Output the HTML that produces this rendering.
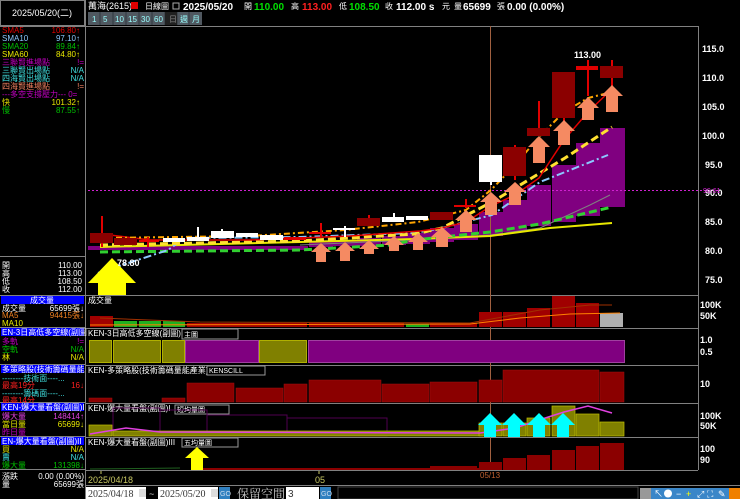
<!DOCTYPE html>
<html><head><meta charset="utf-8"><style>
html,body{margin:0;padding:0;background:#000;width:740px;height:499px;overflow:hidden}
svg{display:block;font-family:"Liberation Sans","Noto Sans CJK TC",sans-serif}
</style></head><body>
<svg width="740" height="499" viewBox="0 0 740 499" xmlns="http://www.w3.org/2000/svg">
<rect width="740" height="499" fill="#000"/>
<!-- LEFT PANEL -->
<g stroke="#808080" stroke-width="1" fill="none">
<rect x="0.5" y="0.5" width="84" height="25"/>
<line x1="85.5" y1="0" x2="85.5" y2="499"/>
<line x1="0" y1="26.5" x2="85" y2="26.5"/>
<line x1="0" y1="256.5" x2="85" y2="256.5"/>
<line x1="0" y1="295.5" x2="85" y2="295.5"/>
<line x1="0" y1="327.5" x2="85" y2="327.5"/>
<line x1="0" y1="364.5" x2="85" y2="364.5"/>
<line x1="0" y1="402.5" x2="85" y2="402.5"/>
<line x1="0" y1="436.5" x2="85" y2="436.5"/>
<line x1="0" y1="469.5" x2="85" y2="469.5"/>
</g>
<text x="42" y="16" fill="#fff" font-size="9" text-anchor="middle">2025/05/20(二)</text>
<g font-size="8">
<text x="2" y="33" fill="#e00000">SMA5</text><text x="80" y="33" fill="#e00000" text-anchor="end">106.80↑</text>
<text x="2" y="41" fill="#8cc8ff">SMA10</text><text x="80" y="41" fill="#8cc8ff" text-anchor="end">97.10↑</text>
<text x="2" y="49" fill="#00c000">SMA20</text><text x="80" y="49" fill="#00c000" text-anchor="end">89.84↑</text>
<text x="2" y="57" fill="#e8e800">SMA60</text><text x="80" y="57" fill="#e8e800" text-anchor="end">84.80↑</text>
<text x="2" y="65" fill="#c000c0">三聯賢進場點</text><text x="84" y="65" fill="#c000c0" text-anchor="end">!=</text>
<text x="2" y="73" fill="#40e0e0">三聯賢出場點</text><text x="84" y="73" fill="#40e0e0" text-anchor="end">N/A</text>
<text x="2" y="81" fill="#40e0e0">四海賢出場點</text><text x="84" y="81" fill="#40e0e0" text-anchor="end">N/A</text>
<text x="2" y="89" fill="#f08060">四海賢進場點</text><text x="84" y="89" fill="#f08060" text-anchor="end">!=</text>
<text x="2" y="97" fill="#c000c0">---多空支撐壓力--- 0=</text>
<text x="2" y="105" fill="#e8e800">快</text><text x="80" y="105" fill="#e8e800" text-anchor="end">101.32↑</text>
<text x="2" y="113" fill="#00c000">慢</text><text x="80" y="113" fill="#00c000" text-anchor="end">87.55↑</text>
<g fill="#fff">
<text x="2" y="268">開</text><text x="82" y="268" text-anchor="end">110.00</text>
<text x="2" y="276">高</text><text x="82" y="276" text-anchor="end">113.00</text>
<text x="2" y="284">低</text><text x="82" y="284" text-anchor="end">108.50</text>
<text x="2" y="292">收</text><text x="82" y="292" text-anchor="end">112.00</text>
</g>
<rect x="1" y="296" width="83" height="8" fill="#0000ff"/><text x="42" y="303" fill="#fff" text-anchor="middle">成交量</text>
<text x="2" y="311" fill="#fff">成交量</text><text x="84" y="311" fill="#fff" text-anchor="end">65699張↓</text>
<text x="2" y="318" fill="#f08020">MA5</text><text x="84" y="318" fill="#f08020" text-anchor="end">94415張↓</text>
<text x="2" y="326" fill="#e8e800">MA10</text>
<rect x="1" y="328" width="83" height="8" fill="#0000ff"/><text x="2" y="335" fill="#fff">EN-3日高低多空線(副圖</text>
<text x="2" y="344" fill="#c000c0">多軌</text><text x="84" y="344" fill="#c000c0" text-anchor="end">!=</text>
<text x="2" y="352" fill="#00c000">空軌</text><text x="84" y="352" fill="#00c000" text-anchor="end">N/A</text>
<text x="2" y="360" fill="#e8e800">林</text><text x="84" y="360" fill="#e8e800" text-anchor="end">N/A</text>
<rect x="1" y="365" width="83" height="8" fill="#0000ff"/><text x="2" y="372" fill="#fff">多策略股(技術籌碼量能</text>
<text x="2" y="381" fill="#40e0e0">--------技術面----...</text>
<text x="2" y="388" fill="#ff2020">最高19分</text><text x="84" y="388" fill="#ff2020" text-anchor="end">16↓</text>
<text x="2" y="396" fill="#40e0e0">--------籌碼面----...</text>
<text x="2" y="403" fill="#ff2020">最高14分</text>
<rect x="1" y="403" width="83" height="8" fill="#0000ff"/><text x="2" y="410" fill="#fff">KEN-爆大量看盤(副圖)I</text>
<text x="2" y="419" fill="#e040e0">爆大量</text><text x="84" y="419" fill="#e040e0" text-anchor="end">148414↑</text>
<text x="2" y="427" fill="#e8e800">當日量</text><text x="84" y="427" fill="#e8e800" text-anchor="end">65699↓</text>
<text x="2" y="435" fill="#c000c0">昨日量</text>
<rect x="1" y="437" width="83" height="8" fill="#0000ff"/><text x="2" y="444" fill="#fff">EN-爆大量看盤(副圖)II</text>
<text x="2" y="452" fill="#e8e800">買</text><text x="84" y="452" fill="#e8e800" text-anchor="end">N/A</text>
<text x="2" y="460" fill="#40e0e0">賣</text><text x="84" y="460" fill="#40e0e0" text-anchor="end">N/A</text>
<text x="2" y="468" fill="#00c000">爆大量</text><text x="84" y="468" fill="#00c000" text-anchor="end">131398↓</text>
<text x="2" y="479" fill="#fff">漲跌</text><text x="84" y="479" fill="#fff" text-anchor="end">0.00 (0.00%)</text>
<text x="2" y="487" fill="#fff">量</text><text x="84" y="487" fill="#fff" text-anchor="end">65699張</text>
</g>
<!-- TOP BAR -->
<g font-size="9">
<text x="88" y="9" fill="#fff">萬海(2615)</text><rect x="131" y="2" width="7" height="7" fill="#e00000"/>
<text x="145" y="9" fill="#fff" font-size="8">日線圖</text><rect x="173" y="3" width="6" height="6" fill="none" stroke="#aaa"/>
<text x="183" y="10" fill="#fff" font-weight="bold" font-size="10">2025/05/20</text>
<text x="244" y="9" fill="#fff" font-size="8">開</text><text x="254" y="10" fill="#00e000" font-weight="bold" font-size="10">110.00</text>
<text x="291" y="9" fill="#fff" font-size="8">高</text><text x="302" y="10" fill="#ff2020" font-weight="bold" font-size="10">113.00</text>
<text x="339" y="9" fill="#fff" font-size="8">低</text><text x="349" y="10" fill="#00e000" font-weight="bold" font-size="10">108.50</text>
<text x="385" y="9" fill="#fff" font-size="8">收</text><text x="396" y="10" fill="#fff" font-weight="bold" font-size="10">112.00 s</text>
<text x="442" y="9" fill="#fff" font-size="8">元</text><text x="454" y="9" fill="#fff" font-size="8">量</text>
<text x="463" y="10" fill="#fff" font-weight="bold" font-size="10">65699</text><text x="497" y="9" fill="#fff" font-size="8">張</text>
<text x="507" y="10" fill="#fff" font-weight="bold" font-size="10">0.00 (0.00%)</text>
</g>
<g font-size="8" fill="#9ff">
<rect x="88" y="12" width="114" height="13" fill="#505860"/>
<g stroke="#30383f"><line x1="100" y1="12" x2="100" y2="25"/><line x1="113" y1="12" x2="113" y2="25"/><line x1="126" y1="12" x2="126" y2="25"/><line x1="139" y1="12" x2="139" y2="25"/><line x1="152" y1="12" x2="152" y2="25"/><line x1="165" y1="12" x2="165" y2="25"/><line x1="177" y1="12" x2="177" y2="25"/><line x1="189" y1="12" x2="189" y2="25"/></g>
<rect x="165" y="12" width="12" height="13" fill="#202020"/>
<text x="92" y="22">1</text><text x="103" y="22">5</text><text x="115" y="22">10</text><text x="128" y="22">15</text><text x="141" y="22">30</text><text x="154" y="22">60</text>
<text x="169" y="22" fill="#888">日</text><text x="180" y="22">週</text><text x="192" y="22">月</text>
</g>
<!-- GRID -->
<g stroke="#808080" fill="none">
<line x1="86" y1="26.5" x2="698" y2="26.5"/>
<line x1="698.5" y1="26" x2="698.5" y2="470"/>
<line x1="86" y1="295.5" x2="698" y2="295.5"/>
<line x1="86" y1="328.5" x2="698" y2="328.5"/>
<line x1="86" y1="365.5" x2="698" y2="365.5"/>
<line x1="86" y1="403.5" x2="698" y2="403.5"/>
<line x1="86" y1="437.5" x2="698" y2="437.5"/>
<line x1="86" y1="470.5" x2="698" y2="470.5"/>
<line x1="86" y1="485.5" x2="740" y2="485.5"/>
</g>
<!-- purple fills -->
<g fill="#800080">
<rect x="309" y="241" width="24" height="6"/><rect x="333" y="240" width="24" height="6"/><rect x="357" y="238" width="24" height="8"/><rect x="382" y="236" width="24" height="9"/><rect x="406" y="233" width="24" height="11"/><rect x="430" y="228" width="24" height="14"/><rect x="454" y="224" width="24" height="16"/><rect x="479" y="212" width="24" height="24"/><rect x="503" y="200" width="24" height="32"/><rect x="527" y="185" width="24" height="41"/><rect x="552" y="165" width="24" height="57"/><rect x="576" y="143" width="24" height="73"/><rect x="600" y="128" width="25" height="79"/>
<rect x="88" y="246" width="220" height="4"/>
</g>
<line x1="88" y1="190.5" x2="718" y2="190.5" stroke="#d020d0" stroke-dasharray="2,2"/>
<line x1="490.5" y1="26" x2="490.5" y2="470" stroke="#a06040"/>
<!-- MAs -->
<polyline fill="none" stroke="#808080" stroke-width="1" points="300,245 415,240 490,235 540,228 590,205 610,195"/>
<polyline fill="none" stroke="#e8e800" stroke-width="2" points="100,247 300,242 415,239 490,236 550,228 612,223"/>
<polyline fill="none" stroke="#30d030" stroke-width="3" stroke-dasharray="8,4" points="100,252 300,250 390,245 415,240 490,232 540,224 612,207"/>
<polyline fill="none" stroke="#8cc8ff" stroke-width="2" stroke-dasharray="8,3,2,3" points="98,273 168,250 185,238 300,237 415,233 442,228 492,215 540,182 608,155"/>
<polyline fill="none" stroke="#ffe030" stroke-width="3" stroke-dasharray="8,4" points="100,245 300,241 415,234 442,228 492,202 540,173 565,158 612,127"/>
<polyline fill="none" stroke="#e00000" stroke-width="1.5" points="102,234 150,240 250,240 350,236 420,231 442,228 466,222 491,206 515,195 539,178 564,140 588,112 612,89"/>
<polyline fill="none" stroke="#ffa500" stroke-width="2" stroke-dasharray="6,3,2,3" points="102,238 250,236 345,230 418,222 466,210 491,190 515,165 539,137 564,112 588,98 612,92"/>
<!-- candles -->
<g stroke="#e00000" stroke-width="2">
<line x1="102" y1="216" x2="102" y2="247"/><line x1="148" y1="237" x2="148" y2="247"/><line x1="321" y1="223" x2="321" y2="237"/><line x1="369" y1="215" x2="369" y2="226"/><line x1="466" y1="199" x2="466" y2="208"/><line x1="515" y1="145" x2="515" y2="180"/><line x1="539" y1="101" x2="539" y2="136"/><line x1="564" y1="118" x2="564" y2="121"/><line x1="588" y1="60" x2="588" y2="96"/><line x1="612" y1="60" x2="612" y2="87"/>
</g>
<g stroke="#fff" stroke-width="2"><line x1="198" y1="227" x2="198" y2="238"/><line x1="222" y1="229" x2="222" y2="236"/><line x1="345" y1="226" x2="345" y2="237"/><line x1="394" y1="213" x2="394" y2="222"/><line x1="491" y1="155" x2="491" y2="185"/></g>
<g fill="#8b0000">
<rect x="90" y="233" width="23" height="10"/><rect x="114" y="238" width="23" height="7"/><rect x="357" y="218" width="23" height="8"/><rect x="430" y="212" width="23" height="8"/><rect x="503" y="147" width="23" height="29"/><rect x="527" y="128" width="23" height="8"/><rect x="552" y="72" width="23" height="46"/><rect x="600" y="66" width="23" height="12"/>
</g>
<g fill="#e00000"><rect x="139" y="240" width="20" height="2"/><rect x="284" y="237" width="22" height="3"/><rect x="309" y="232" width="22" height="2"/><rect x="454" y="205" width="22" height="2"/><rect x="576" y="66" width="22" height="4"/></g>
<g fill="#fff"><rect x="163" y="238" width="22" height="4"/><rect x="187" y="237" width="22" height="4"/><rect x="211" y="231" width="23" height="7"/><rect x="236" y="233" width="22" height="4"/><rect x="260" y="235" width="23" height="5"/><rect x="333" y="228" width="22" height="2"/><rect x="382" y="217" width="22" height="5"/><rect x="406" y="216" width="22" height="4"/><rect x="479" y="155" width="23" height="27"/></g>
<!-- salmon arrows -->
<g fill="#f58a62">
<path d="M321,243 l-10,9 h5 v10 h10 v-10 h5z"/>
<path d="M345,242 l-10,9 h5 v10 h10 v-10 h5z"/>
<path d="M369,240 l-10,9 h5 v5 h10 v-5 h5z"/>
<path d="M394,236 l-10,9 h5 v6 h10 v-6 h5z"/>
<path d="M418,233 l-10,9 h5 v8 h10 v-8 h5z"/>
<path d="M442,227 l-11,10 h5 v10 h12 v-10 h5z"/>
<path d="M466,210 l-11,10 h5 v12 h12 v-12 h5z"/>
<path d="M491,192 l-11,10 h5 v13 h12 v-13 h5z"/>
<path d="M515,182 l-11,10 h5 v13 h12 v-13 h5z"/>
<path d="M539,136 l-11,11 h5 v16 h12 v-16 h5z"/>
<path d="M564,120 l-11,11 h5 v14 h12 v-14 h5z"/>
<path d="M588,97 l-11,11 h5 v12 h12 v-12 h5z"/>
<path d="M612,85 l-11,11 h5 v16 h12 v-16 h5z"/>
</g>
<path d="M112,258 l-24,25 h10 v12 h28 v-12 h10z" fill="#ffff00"/>
<text x="117" y="266" fill="#fff" font-size="9" font-weight="bold">78.80</text>
<text x="574" y="58" fill="#fff" font-size="9" font-weight="bold">113.00</text>
<g fill="#fff" font-size="9" font-weight="bold">
<text x="702" y="52">115.0</text><text x="702" y="81">110.0</text><text x="702" y="110">105.0</text><text x="702" y="139">100.0</text><text x="705" y="168">95.0</text><text x="705" y="196">90.0</text><text x="705" y="225">85.0</text><text x="705" y="254">80.0</text><text x="705" y="283">75.0</text>
<text x="700" y="308">100K</text><text x="700" y="319">50K</text><text x="700" y="343">1.0</text><text x="700" y="355">0.5</text><text x="700" y="387">10</text><text x="700" y="419">100K</text><text x="700" y="429">50K</text><text x="700" y="452">100</text><text x="700" y="463">90</text>
</g>
<text x="703" y="193" fill="#d020d0" font-size="7">90.61</text>
<!-- volume panel -->
<text x="88" y="303" fill="#fff" font-size="8">成交量</text>
<g fill="#a00000"><rect x="90" y="316" width="23" height="11"/><rect x="187" y="323" width="120" height="4"/><rect x="309" y="323" width="95" height="4"/><rect x="430" y="323" width="47" height="4"/><rect x="479" y="312" width="23" height="15"/><rect x="503" y="312" width="23" height="15"/><rect x="527" y="308" width="23" height="19"/><rect x="552" y="296" width="23" height="31"/><rect x="576" y="303" width="23" height="24"/></g>
<g fill="#20b020"><rect x="114" y="321" width="23" height="6"/><rect x="139" y="321" width="22" height="6"/><rect x="163" y="321" width="22" height="6"/><rect x="406" y="324" width="23" height="3"/></g>
<rect x="600" y="313" width="23" height="14" fill="#b0b0b0"/>
<polyline fill="none" stroke="#ff8000" points="90,325 470,324 520,318 570,314 620,313"/>
<polyline fill="none" stroke="#a03000" points="100,318 200,322 470,323 540,310 590,305 612,305"/>
<!-- 3day panel -->
<text x="88" y="336" fill="#fff" font-size="8">KEN-3日高低多空線(副圖)</text>
<rect x="182" y="329" width="56" height="10" fill="#000" stroke="#999"/><text x="184" y="337" fill="#fff" font-size="7">主圖</text>
<g fill="#808000" stroke="#b0b000"><rect x="89.5" y="340.5" width="22" height="22"/><rect x="113.5" y="340.5" width="47" height="22"/><rect x="162.5" y="340.5" width="22" height="22"/><rect x="259.5" y="340.5" width="47" height="22"/></g>
<g fill="#800080" stroke="#a040a0"><rect x="185.5" y="340.5" width="73" height="22"/><rect x="308.5" y="340.5" width="316" height="22"/></g>
<!-- strategy panel -->
<text x="88" y="373" fill="#fff" font-size="8">KEN-多策略股(技術籌碼量能產業)</text>
<rect x="207" y="366" width="58" height="9" fill="#000" stroke="#999"/><text x="209" y="373" fill="#fff" font-size="7">KENSCILL</text>
<g fill="#8b0000" stroke="#a01010" stroke-width="0.5"><rect x="89" y="398" width="23" height="4"/><rect x="162" y="398" width="23" height="4"/><rect x="187" y="383" width="47" height="19"/><rect x="236" y="388" width="47" height="14"/><rect x="284" y="384" width="23" height="18"/><rect x="309" y="380" width="72" height="22"/><rect x="382" y="384" width="47" height="18"/><rect x="430" y="382" width="47" height="20"/><rect x="479" y="380" width="23" height="22"/><rect x="503" y="370" width="96" height="32"/><rect x="600" y="372" width="24" height="30"/></g>
<!-- explosive I -->
<text x="88" y="411" fill="#fff" font-size="8">KEN-爆大量看盤(副圖)I</text>
<rect x="175" y="405" width="54" height="9" fill="#000" stroke="#999"/><text x="177" y="412" fill="#fff" font-size="7">短均量圖</text>
<g fill="none" stroke="#500050"><rect x="113" y="408" width="47" height="28"/><rect x="160" y="410" width="47" height="26"/><rect x="207" y="415" width="80" height="21"/><rect x="287" y="418" width="100" height="18"/></g>
<g fill="#808000" stroke="#c0c000" stroke-width="0.7"><rect x="89" y="425" width="23" height="11"/><rect x="113" y="431" width="370" height="5"/><rect x="479" y="423" width="23" height="13"/><rect x="503" y="423" width="23" height="13"/><rect x="527" y="418" width="23" height="18"/><rect x="552" y="406" width="23" height="30"/><rect x="576" y="414" width="23" height="22"/><rect x="600" y="422" width="24" height="14"/></g>
<polyline fill="none" stroke="#e040e0" stroke-width="1.5" points="90,434 126,428 160,432 480,433 515,428 539,420 564,412 588,406 612,413"/>
<g fill="#00ffff"><path d="M490,413 l-12,12 h6 v12 h12 v-12 h6z"/><path d="M514,413 l-12,12 h6 v12 h12 v-12 h6z"/><path d="M539,413 l-12,12 h6 v12 h12 v-12 h6z"/><path d="M563,413 l-12,12 h6 v12 h12 v-12 h6z"/></g>
<!-- explosive II -->
<text x="88" y="445" fill="#fff" font-size="8">KEN-爆大量看盤(副圖)III</text>
<rect x="182" y="438" width="56" height="9" fill="#000" stroke="#999"/><text x="184" y="445" fill="#fff" font-size="7">五均量圖</text>
<g fill="#8b0000"><rect x="200" y="468" width="280" height="2"/><rect x="430" y="466" width="47" height="4"/><rect x="479" y="462" width="23" height="8"/><rect x="503" y="458" width="23" height="12"/><rect x="527" y="455" width="23" height="15"/><rect x="552" y="450" width="23" height="20"/><rect x="576" y="446" width="23" height="24"/><rect x="600" y="443" width="24" height="27"/></g>
<line x1="90" y1="469" x2="180" y2="468" stroke="#206020"/>
<path d="M197,447 l-12,11 h6 v12 h12 v-12 h6z" fill="#ffff00"/>
<!-- time axis -->
<g stroke="#c8c864"><line x1="101" y1="471" x2="101" y2="474"/><line x1="319" y1="471" x2="319" y2="474"/></g>
<text x="88" y="483" fill="#c8c864" font-size="9">2025/04/18</text>
<text x="315" y="483" fill="#c8c864" font-size="9">05</text>
<text x="480" y="478" fill="#c06030" font-size="8">05/13</text>
<!-- bottom bar -->
<rect x="86" y="487" width="60" height="12" fill="#fff"/><text x="88" y="497" fill="#333" font-size="10" font-family="Liberation Serif,serif">2025/04/18</text><rect x="139" y="489" width="7" height="8" fill="#ddd"/>
<text x="149" y="497" fill="#ccc" font-size="9">~</text>
<rect x="158" y="487" width="60" height="12" fill="#fff"/><text x="160" y="497" fill="#333" font-size="10" font-family="Liberation Serif,serif">2025/05/20</text><rect x="211" y="489" width="7" height="8" fill="#ddd"/>
<rect x="219" y="487" width="11" height="12" fill="#3080c0"/><text x="220" y="496" fill="#cde" font-size="7">GO</text>
<text x="237" y="498" fill="#ccc" font-size="12" font-family="Noto Serif CJK SC,serif">保留空間</text>
<rect x="286" y="487" width="33" height="12" fill="#fff"/><text x="288" y="497" fill="#333" font-size="10">3</text>
<rect x="320" y="487" width="11" height="12" fill="#3080c0"/><text x="321" y="496" fill="#cde" font-size="7">GO</text>
<rect x="338" y="487" width="300" height="12" fill="#000" stroke="#444"/>
<rect x="640" y="488" width="100" height="11" fill="#3a86c8"/>
<rect x="640" y="488" width="11" height="11" fill="#999"/>
<g fill="#fff" font-size="9"><text x="654" y="497">↖</text><circle cx="668" cy="493.5" r="4"/><text x="676" y="497">−</text><text x="686" y="497" fill="#ff0">+</text><text x="697" y="497">⤢</text><text x="707" y="497">⛶</text><text x="718" y="497">✎</text></g>
<rect x="729" y="488" width="11" height="11" fill="#f08000"/>
</svg>
</body></html>
